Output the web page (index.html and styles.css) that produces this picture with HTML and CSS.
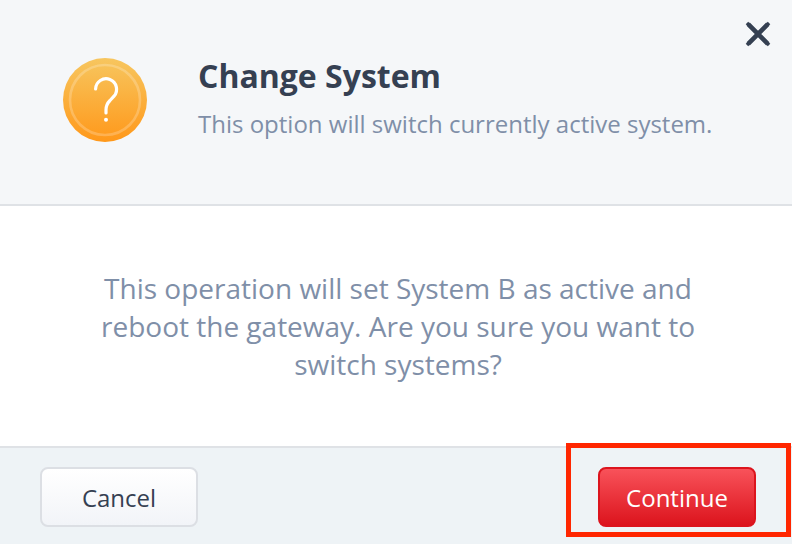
FILE: index.html
```html
<!doctype html>
<html lang="en">

<head>
    <meta charset="utf-8">
    <title>Change System</title>
    <link rel="stylesheet" href="styles.css">
</head>

<body>
    <div class="modal">
        <div class="modal-header">
            <svg class="modal-icon" width="84" height="84" viewBox="0 0 84 84">
                <defs>
                    <linearGradient id="orange" x1="0" y1="0" x2="0" y2="1">
                        <stop offset="0" stop-color="#f7c65f"/>
                        <stop offset="1" stop-color="#ff981a"/>
                    </linearGradient>
                </defs>
                <circle cx="42" cy="42" r="42" fill="url(#orange)"/>
                <circle cx="42" cy="42" r="35" fill="none" stroke="#fff" stroke-opacity=".22" stroke-width="2.600"/>
                <path d="M32.600 31A10.500 10.500 0 1 1 51 38.200L47 42.500Q43 46.500 43 52V55" fill="none" stroke="#fff" stroke-width="3.200" stroke-linecap="round"/>
                <circle cx="43" cy="61.700" r="2" fill="#fff"/>
            </svg>
            <div class="modal-heading">
                <h1>Change System</h1>
                <p>This option will switch currently active system.</p>
            </div>
            <button class="btn-close" aria-label="Close">
                <svg width="26" height="26" viewBox="0 0 26 26">
                    <path d="M3.200 3.200L22.800 22.800M22.800 3.200L3.200 22.800" stroke="#354052" stroke-width="4.500" />
                    <path d="M3.200 3.200L22.800 22.800M22.800 3.200L3.200 22.800" stroke="#354052" stroke-width="3.500" stroke-linecap="square"/>
                </svg>
            </button>
        </div>
        <div class="modal-body">
            <p>This operation will set System B as active and reboot the gateway. Are you sure you want to switch systems?</p>
        </div>
        <div class="modal-footer">
            <button class="btn">Cancel</button>
            <button class="btn btn-danger">Continue</button>
            <div class="highlight"></div>
        </div>
    </div>
</body>

</html>
```
FILE: styles.css
```css
html,
body {
    margin: 0;
    height: 100%;
    overflow: hidden;
}

body,
button {
    font-family: "Open Sans", sans-serif;
}

.modal {
    display: flex;
    flex-direction: column;
    height: 544px;
    background: #fff;
    color: #7f8fa8;
}

.modal-header {
    position: relative;
    display: flex;
    box-sizing: border-box;
    height: 206px;
    padding: 58px 0 0 63px;
    background: #f5f7f9;
    border-bottom: 2px solid #dfe2e6;
}

.modal-icon {
    flex: none;
}

.modal-heading {
    padding-left: 51px;
    white-space: nowrap;
}

.modal-heading h1 {
    margin: -4px 0 0;
    color: #354052;
    font-size: 32px;
    line-height: 44px;
    font-weight: 700;
}

.modal-heading p {
    margin: 9px 0 0;
    font-size: 24px;
    line-height: 34px;
}

.btn-close {
    position: absolute;
    top: 21px;
    right: 21px;
    width: 26px;
    height: 26px;
    padding: 0;
    border: 0;
    background: none;
}

.btn-close svg {
    display: block;
}

.modal-body {
    box-sizing: border-box;
    height: 240px;
    padding: 63px 80px 0 84px;
    text-align: center;
}

.modal-body p {
    margin: 0;
    font-size: 28px;
    line-height: 38px;
}

.modal-footer {
    position: relative;
    display: flex;
    flex: 1;
    justify-content: space-between;
    align-items: flex-start;
    padding: 19px 36px 0 40px;
    background: #eef3f6;
    border-top: 2px solid #dfe2e6;
}

.btn {
    box-sizing: border-box;
    width: 158px;
    height: 60px;
    padding: 0;
    border: 2px solid #dcdfe4;
    border-radius: 8px;
    background: linear-gradient(#fff, #f2f4f8);
    color: #354052;
    font-size: 24px;
}

.btn-danger {
    border-color: #dc141d;
    background: linear-gradient(#f8525a, #dc141d);
    color: #fff;
}

/* red frame around the confirm button */
.highlight {
    position: absolute;
    top: -5px;
    right: 1px;
    box-sizing: border-box;
    width: 225px;
    height: 94px;
    border: 5px solid #ff2600;
}
```
